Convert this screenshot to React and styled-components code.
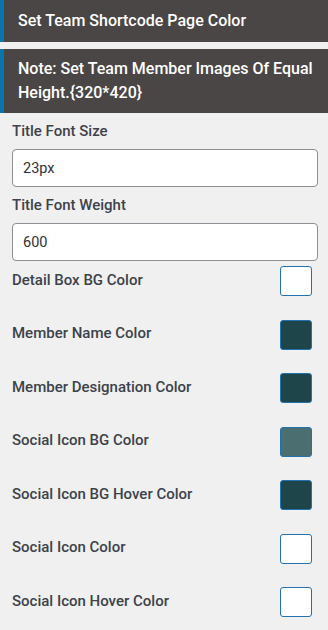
import React from 'react'
import styled, { createGlobalStyle } from 'styled-components'

const Global = createGlobalStyle`
  body {
    margin: 0;
    background: #f0f0f1;
    font-family: Roboto, "Liberation Sans", sans-serif;
  }
`

const colors = [
  { label: 'Detail Box BG Color', value: '#ffffff' },
  { label: 'Member Name Color', value: '#1e4549' },
  { label: 'Member Designation Color', value: '#1e4549' },
  { label: 'Social Icon BG Color', value: '#4b6f70' },
  { label: 'Social Icon BG Hover Color', value: '#1e4549' },
  { label: 'Social Icon Color', value: '#ffffff' },
  { label: 'Social Icon Hover Color', value: '#ffffff' },
]

export default function App() {
  return (
    <>
      <Global />
      <Panel>
        <Bar>Set Team Shortcode Page Color</Bar>
        <Bar note>Note: Set Team Member Images Of Equal Height.{'{320*420}'}</Bar>
        <Fields>
          <Label>Title Font Size</Label>
          <Input defaultValue="23px" />
          <Label>Title Font Weight</Label>
          <Input defaultValue="600" />
          <ColorList>
            {colors.map((c) => (
              <ColorRow key={c.label}>
                <Label as="span">{c.label}</Label>
                <Swatch $color={c.value} />
              </ColorRow>
            ))}
          </ColorList>
        </Fields>
      </Panel>
    </>
  )
}

const Panel = styled.div`
  width: 328px;
  height: 630px;
  overflow: hidden;
  background: #f0f0f1;
`

const Bar = styled.div`
  box-sizing: border-box;
  background: #4a4646;
  border-left: 4px solid #0a75ab;
  color: #fff;
  font-size: 16px;
  font-weight: 500;
  line-height: 24px;
  padding: ${(p) => (p.note ? '8px 4px 8px 14px' : '9px 4px 9px 14px')};
  height: ${(p) => (p.note ? '64px' : '42px')};
  margin-bottom: ${(p) => (p.note ? '0' : '7px')};
`

const Fields = styled.div`
  padding: 8px 10px 0 12px;
`

const Label = styled.div`
  display: block;
  color: #3c434a;
  font-size: 15px;
  font-weight: 500;
  line-height: 20px;
  margin-bottom: 8px;
`

const Input = styled.input`
  box-sizing: border-box;
  display: block;
  width: 100%;
  height: 38px;
  padding: 0 10px;
  margin: 0 0 8px;
  border: 1px solid #8c8f94;
  border-radius: 4px;
  background: #fff;
  color: #2c3338;
  font-family: Roboto, "Liberation Sans", sans-serif;
  font-size: 14.5px;
  outline: none;
`

const ColorList = styled.div`
  margin-top: -3px;
`

const ColorRow = styled.div`
  display: flex;
  align-items: center;
  justify-content: space-between;
  height: 30px;
  margin-bottom: 23.5px;
  & > span {
    margin-bottom: 0;
    margin-top: -3px;
  }
`

const Swatch = styled.div`
  box-sizing: border-box;
  width: 32px;
  height: 30px;
  margin-right: 6px;
  border: 1px solid #2271b1;
  border-radius: 3px;
  background: ${(p) => p.$color};
`
